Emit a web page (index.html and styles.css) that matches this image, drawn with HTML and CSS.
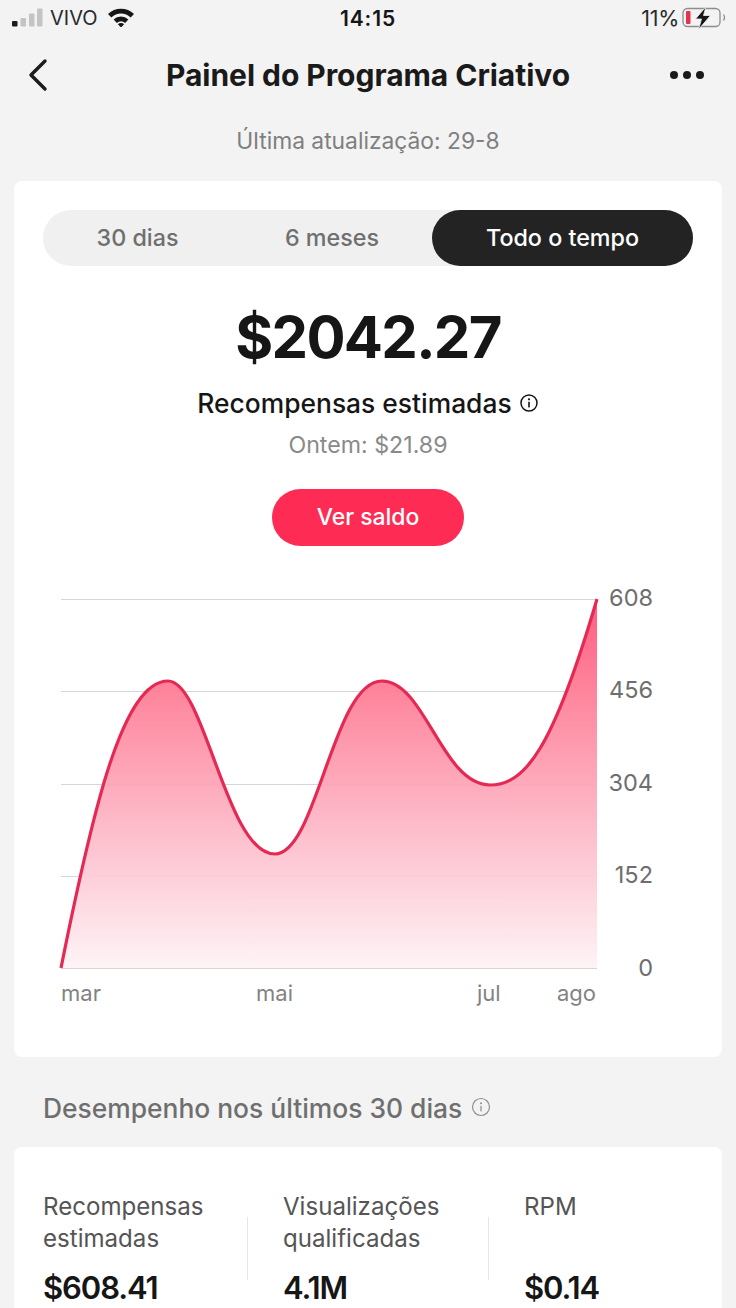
FILE: index.html
```html
<!DOCTYPE html>
<html lang="pt-BR">
<head>
<meta charset="utf-8">
<title>Painel do Programa Criativo</title>
<link rel="stylesheet" href="styles.css">
</head>
<body>
<div class="screen">
  <header class="status">
    <div class="status-side">
      <svg class="signal" width="31" height="20" viewBox="0 0 31 20">
        <rect x="0" y="13" width="5.500" height="5.500" rx="1" fill="#1c1c1c"/>
        <rect x="8.500" y="10" width="5.500" height="8.500" rx="1" fill="#c4c4c4"/>
        <rect x="17" y="5.500" width="5.500" height="13" rx="1" fill="#c4c4c4"/>
        <rect x="25" y="0.500" width="5.500" height="18" rx="1" fill="#c4c4c4"/>
      </svg>
      <span class="carrier">VIVO</span>
      <svg class="wifi" width="28" height="20" viewBox="0 0 28 20">
        <path d="M1 7 A19 19 0 0 1 27 7 L23.600 10.400 A14 14 0 0 0 4.400 10.400 Z" fill="#161616"/>
        <path d="M6.600 12.600 A10.500 10.500 0 0 1 21.400 12.600 L18.100 15.900 A6 6 0 0 0 9.900 15.900 Z" fill="#161616"/>
        <path d="M14 20.500 L10.900 17.300 A4.400 4.400 0 0 1 17.100 17.300 Z" fill="#161616"/>
      </svg>
    </div>
    <div class="clock">14:15</div>
    <div class="status-side status-right">
      <span class="percent">11%</span>
      <svg class="battery" width="44" height="24" viewBox="0 0 44 24">
        <rect x="1" y="2.500" width="37" height="18" rx="4.500" fill="none" stroke="#8d8d8d" stroke-width="1.300"/>
        <rect x="4" y="5" width="4.500" height="13" rx="1" fill="#e5334d"/>
        <path d="M24 0.500 L13.500 13 L19.500 13 L16.500 23.500 L28.500 9.500 L21.500 9.500 Z" fill="#161616" stroke="#f3f3f3" stroke-width="0.800"/>
        <path d="M41.500 8.500 Q43.500 11.500 41.500 14.500" fill="none" stroke="#8d8d8d" stroke-width="1.300"/>
      </svg>
    </div>
  </header>

  <nav class="topbar">
    <svg class="back" width="24" height="34" viewBox="0 0 24 34">
      <path d="M19 3 L5 17 L19 31" fill="none" stroke="#1c1c1c" stroke-width="3.400" stroke-linecap="round" stroke-linejoin="round"/>
    </svg>
    <h1 class="title">Painel do Programa Criativo</h1>
    <div class="more"><i></i><i></i><i></i></div>
  </nav>

  <p class="updated">Última atualização: 29-8</p>

  <section class="card summary">
    <div class="tabs">
      <span class="tab tab-month">30 dias</span>
      <span class="tab tab-half">6 meses</span>
      <span class="tab tab-active">Todo o tempo</span>
    </div>
    <div class="amount">$2042.27</div>
    <div class="rewards">
      <span>Recompensas estimadas</span>
      <svg width="20" height="20" viewBox="0 0 20 20">
        <circle cx="10" cy="10" r="8" fill="none" stroke="#161616" stroke-width="1.500"/>
        <circle cx="10" cy="6.300" r="1.100" fill="#161616"/>
        <rect x="9.200" y="8.800" width="1.600" height="5.600" fill="#161616"/>
      </svg>
    </div>
    <div class="yesterday">Ontem: $21.89</div>
    <div class="balance">Ver saldo</div>

    <svg class="chart" width="650" height="430" viewBox="0 0 650 430">
      <defs>
        <linearGradient id="areaFill" x1="0" y1="0" x2="0" y2="1">
          <stop offset="0" stop-color="#fe5078"/>
          <stop offset="0.240" stop-color="#fe7a93"/>
          <stop offset="0.600" stop-color="#fdb4c4"/>
          <stop offset="1" stop-color="#fdf3f5"/>
        </linearGradient>
      </defs>
      <g class="gridline">
        <line x1="18" x2="554" y1="18.500" y2="18.500"/>
        <line x1="18" x2="554" y1="110.500" y2="110.500"/>
        <line x1="18" x2="554" y1="203.500" y2="203.500"/>
        <line x1="18" x2="554" y1="295.500" y2="295.500"/>
        <line x1="18" x2="554" y1="387.500" y2="387.500"/>
      </g>
      <path class="area" d="M18 387 C50 227 80 100 125 100 C162 100 183 273 232 273 C274 273 290 100 339 100 C382 100 399 204 447 204 C482 204 510 168 554 18 L554 387 Z" fill="url(#areaFill)"/>
      <path class="curve" d="M18 387 C50 227 80 100 125 100 C162 100 183 273 232 273 C274 273 290 100 339 100 C382 100 399 204 447 204 C482 204 510 168 554 18"/>
      <g class="y-label">
        <text x="610" y="25">608</text>
        <text x="610" y="117">456</text>
        <text x="610" y="210">304</text>
        <text x="610" y="302">152</text>
        <text x="610" y="395">0</text>
      </g>
      <g class="x-label">
        <text x="18" y="420">mar</text>
        <text x="213" y="420">mai</text>
        <text x="434" y="420">jul</text>
        <text x="514" y="420">ago</text>
      </g>
    </svg>
  </section>

  <h2 class="section-title">
    <span>Desempenho nos últimos 30 dias</span>
    <svg width="20" height="20" viewBox="0 0 20 20">
      <circle cx="10" cy="10" r="8.500" fill="none" stroke="#8f8f8f" stroke-width="1.200"/>
      <circle cx="10" cy="6.300" r="1" fill="#8f8f8f"/>
      <rect x="9.400" y="8.800" width="1.200" height="5.600" fill="#8f8f8f"/>
    </svg>
  </h2>

  <section class="card metrics">
    <div class="metric">
      <div class="metric-label">Recompensas estimadas</div>
      <div class="metric-value">$608.41</div>
    </div>
    <div class="metric metric-divided">
      <div class="metric-label">Visualizações qualificadas</div>
      <div class="metric-value">4.1M</div>
    </div>
    <div class="metric metric-divided">
      <div class="metric-label">RPM</div>
      <div class="metric-value">$0.14</div>
    </div>
  </section>
</div>
</body>
</html>
```
FILE: styles.css
```css
* {
  box-sizing: border-box;
}

html,
body {
  margin: 0;
  height: 100%;
  overflow: hidden;
}

body {
  background: #f3f3f3;
  font-family: Inter, "Liberation Sans", sans-serif;
  color: #161616;
}

.screen {
  height: 1308px;
  overflow: hidden;
  padding: 0 14px;
}

/* status bar */
.status {
  display: grid;
  grid-template-columns: 1fr auto 1fr;
  align-items: center;
  height: 36px;
  margin: 0 -4px 0 -2px;
}

.status-side {
  display: flex;
  align-items: center;
}

.carrier {
  font-size: 20px;
  margin-left: 7px;
  color: #2a2a2a;
}

.wifi {
  margin-left: 9px;
  margin-top: -2px;
}

.clock {
  font-size: 21px;
  font-weight: 600;
  letter-spacing: 0.900px;
  margin-left: -2px;
}

.status-right {
  justify-content: flex-end;
}

.percent {
  font-size: 21.500px;
  color: #2a2a2a;
  letter-spacing: -0.3px;
}

.battery {
  margin-left: 3px;
}

/* navigation */
.topbar {
  display: grid;
  grid-template-columns: 1fr auto 1fr;
  align-items: center;
  height: 78px;
  padding: 0 18px;
}

.back {
  margin-left: -6px;
}

.title {
  margin: 0;
  font-size: 30px;
  font-weight: 700;
  letter-spacing: -0.05px;
  color: #1a1a1a;
  white-space: nowrap;
}

.more {
  display: flex;
  gap: 5px;
  justify-self: end;
}

.more i {
  width: 8px;
  height: 8px;
  border-radius: 50%;
  background: #1a1a1a;
}

.updated {
  margin: 0;
  height: 67px;
  padding-top: 13px;
  text-align: center;
  font-size: 22.800px;
  line-height: 28px;
  color: #7f7f7f;
}

/* cards */
.card {
  background: #fff;
  border-radius: 8px;
}

.summary {
  display: flex;
  flex-direction: column;
  align-items: center;
  height: 876px;
  padding: 29px 29px 0;
}

.tabs {
  display: flex;
  align-self: stretch;
  height: 56px;
  border-radius: 28px;
  background: #f0f0f0;
  font-size: 23.300px;
  font-weight: 500;
  color: #6f6f6f;
}

.tab {
  display: flex;
  align-items: center;
  justify-content: center;
  padding-bottom: 2px;
}

.tab-month {
  width: 189px;
}

.tab-half {
  width: 200px;
}

.tab-active {
  flex: 1;
  border-radius: 28px;
  background: #232323;
  color: #fff;
}

.amount {
  margin-top: 37px;
  font-size: 58px;
  line-height: 68px;
  letter-spacing: -1.700px;
  font-weight: 700;
  color: #161616;
}

.rewards {
  display: flex;
  align-items: center;
  gap: 7px;
  margin-top: 16px;
  font-size: 26.400px;
  line-height: 32px;
  font-weight: 500;
}

.yesterday {
  margin-top: 12px;
  font-size: 23.200px;
  line-height: 28px;
  color: #8a8a8a;
}

.balance {
  display: flex;
  align-items: center;
  justify-content: center;
  width: 192px;
  height: 57px;
  margin-top: 30px;
  padding-bottom: 2px;
  border-radius: 29px;
  background: #fe2c55;
  color: #fff;
  font-size: 22.900px;
  font-weight: 500;
}

.chart {
  align-self: flex-start;
  margin: 35px 0 0 0;
}

.gridline line {
  stroke: #d6d6d6;
  stroke-width: 1;
}

.area {
  opacity: 0.93;
}

.curve {
  fill: none;
  stroke: #e42a54;
  stroke-width: 3.200;
}

.y-label text {
  font-size: 23.500px;
  fill: #6e6e6e;
  text-anchor: end;
}

.x-label text {
  font-size: 22px;
  fill: #828282;
}

/* last 30 days */
.section-title {
  display: flex;
  align-items: flex-start;
  gap: 9px;
  height: 90px;
  margin: 0;
  padding: 35px 0 0 29px;
  font-size: 26.400px;
  line-height: 32px;
  font-weight: 500;
  color: #6f6f6f;
}

.section-title svg {
  margin-top: 5px;
}

.metrics {
  display: grid;
  grid-template-columns: 204px 241px 1fr;
  height: 200px;
  padding: 44px 29px 0;
}

.metric {
  position: relative;
  display: flex;
  flex-direction: column;
}

.metric-divided {
  padding-left: 36px;
}

/* short rule between neighbouring metrics */
.metric-divided::before {
  content: "";
  position: absolute;
  left: 0;
  top: 26px;
  width: 1px;
  height: 63px;
  background: #e6e6e6;
}

.metric-label {
  height: 66px;
  font-size: 24.100px;
  line-height: 32px;
  color: #555;
}

.metric-value {
  margin-top: 13px;
  font-size: 31px;
  line-height: 36px;
  letter-spacing: -1.100px;
  font-weight: 600;
}
```
